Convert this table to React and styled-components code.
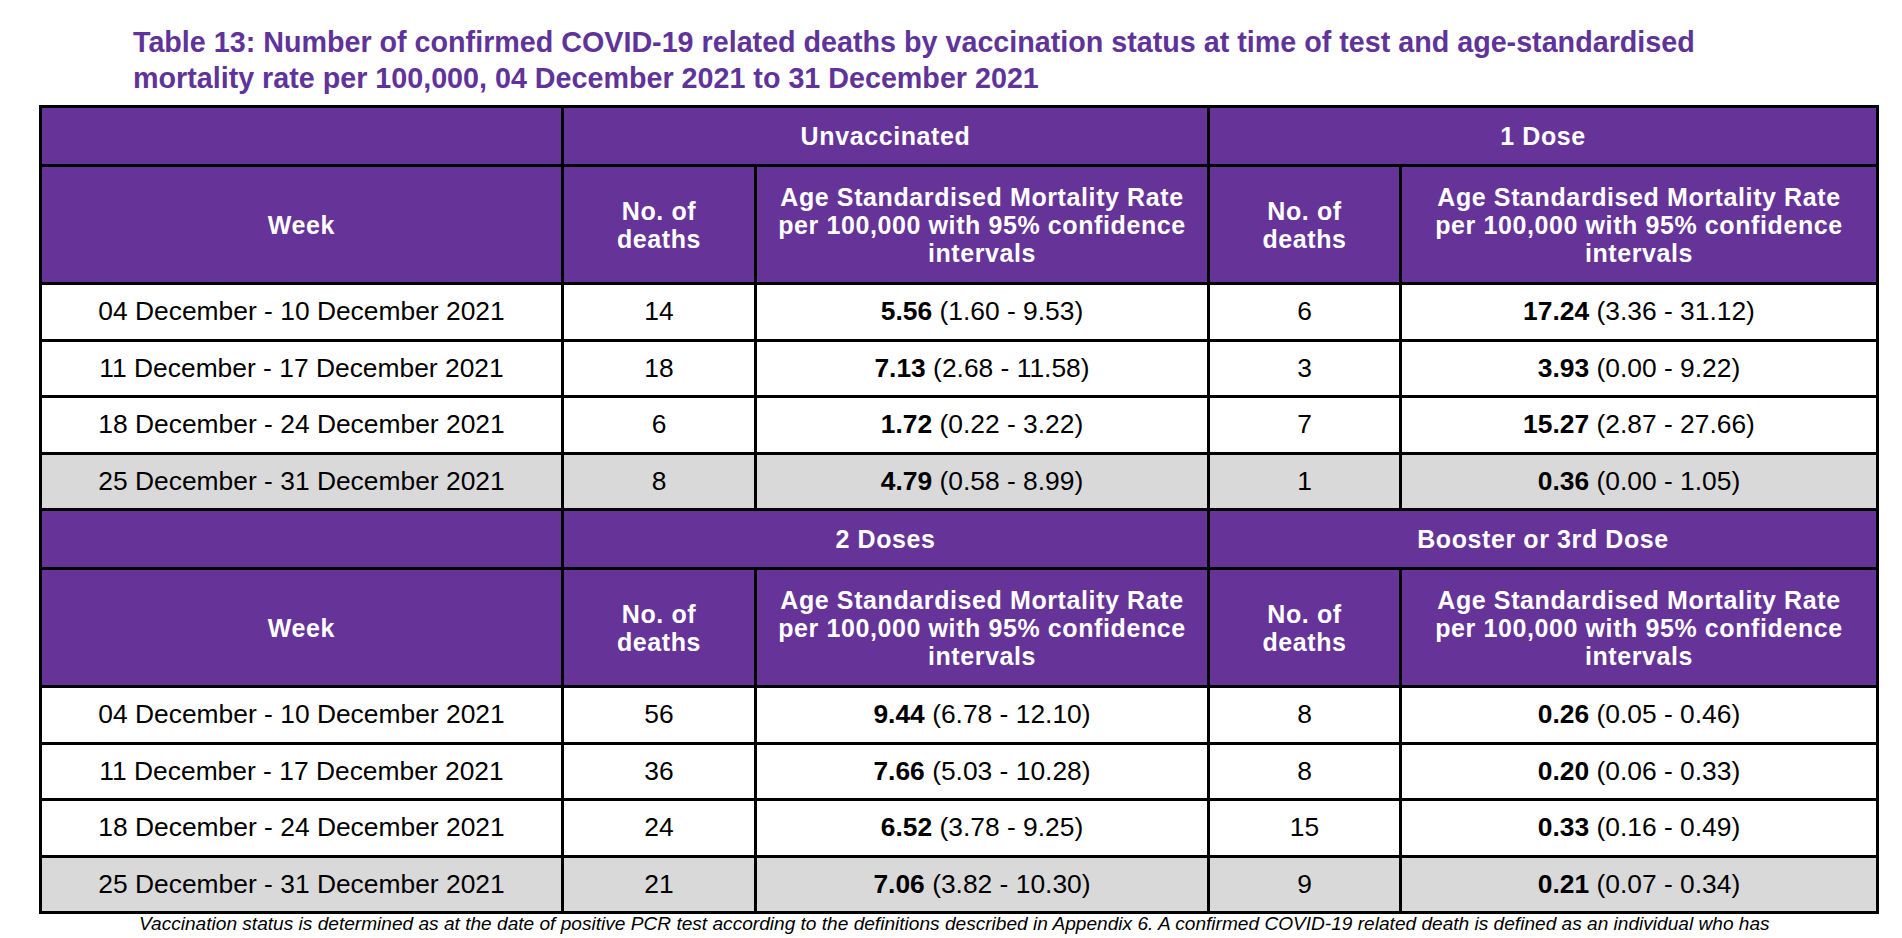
import React from "react";
import styled, { createGlobalStyle } from "styled-components";

const GlobalStyle = createGlobalStyle`
  html, body {
    margin: 0;
    padding: 0;
    background: #ffffff;
    overflow: hidden;
  }
  body {
    font-family: "Liberation Sans", Arial, sans-serif;
    color: #000;
  }
`;

const groups = [
  {
    left: "Unvaccinated",
    right: "1 Dose",
    rows: [
      ["04 December - 10 December 2021", "14", "5.56", "(1.60 - 9.53)", "6", "17.24", "(3.36 - 31.12)"],
      ["11 December - 17 December 2021", "18", "7.13", "(2.68 - 11.58)", "3", "3.93", "(0.00 - 9.22)"],
      ["18 December - 24 December 2021", "6", "1.72", "(0.22 - 3.22)", "7", "15.27", "(2.87 - 27.66)"],
      ["25 December - 31 December 2021", "8", "4.79", "(0.58 - 8.99)", "1", "0.36", "(0.00 - 1.05)"],
    ],
  },
  {
    left: "2 Doses",
    right: "Booster or 3rd Dose",
    rows: [
      ["04 December - 10 December 2021", "56", "9.44", "(6.78 - 12.10)", "8", "0.26", "(0.05 - 0.46)"],
      ["11 December - 17 December 2021", "36", "7.66", "(5.03 - 10.28)", "8", "0.20", "(0.06 - 0.33)"],
      ["18 December - 24 December 2021", "24", "6.52", "(3.78 - 9.25)", "15", "0.33", "(0.16 - 0.49)"],
      ["25 December - 31 December 2021", "21", "7.06", "(3.82 - 10.30)", "9", "0.21", "(0.07 - 0.34)"],
    ],
  },
];

const colWidths = [522, 193, 453, 192, 477];

const RateHeading = () => (
  <>
    Age Standardised Mortality Rate
    <br />
    per 100,000 with 95% confidence
    <br />
    intervals
  </>
);

const App = () => {
  return (
    <Page>
      <GlobalStyle />
      <Title>
        Table 13: Number of confirmed COVID-19 related deaths by vaccination status at time of test and age-standardised
        <br />
        mortality rate per 100,000, 04 December 2021 to 31 December 2021
      </Title>
      <Table>
        <colgroup>
          {colWidths.map((w, i) => (
            <Col key={i} $w={w} />
          ))}
        </colgroup>
        {groups.map((g) => (
          <tbody key={g.left}>
            <tr>
              <GroupCell />
              <GroupCell colSpan={2}>{g.left}</GroupCell>
              <GroupCell colSpan={2}>{g.right}</GroupCell>
            </tr>
            <tr>
              <HeadCell>Week</HeadCell>
              <HeadCell>
                No. of
                <br />
                deaths
              </HeadCell>
              <HeadCell>
                <RateHeading />
              </HeadCell>
              <HeadCell>
                No. of
                <br />
                deaths
              </HeadCell>
              <HeadCell>
                <RateHeading />
              </HeadCell>
            </tr>
            {g.rows.map((r, i) => (
              <tr key={r[0]}>
                <Cell $shaded={i === 3}>{r[0]}</Cell>
                <Cell $shaded={i === 3}>{r[1]}</Cell>
                <Cell $shaded={i === 3}>
                  <Rate>{r[2]}</Rate> {r[3]}
                </Cell>
                <Cell $shaded={i === 3}>{r[4]}</Cell>
                <Cell $shaded={i === 3}>
                  <Rate>{r[5]}</Rate> {r[6]}
                </Cell>
              </tr>
            ))}
          </tbody>
        ))}
      </Table>
      <Footnote>
        Vaccination status is determined as at the date of positive PCR test according to the definitions described in
        Appendix 6. A confirmed COVID-19 related death is defined as an individual who has
      </Footnote>
    </Page>
  );
};

const Page = styled.div`
  width: 1902px;
  height: 938px;
  overflow: hidden;
`;

const Title = styled.h1`
  margin: 0;
  padding: 24px 0 0 133px;
  font-family: "Liberation Sans", Arial, sans-serif;
  font-size: 28.7px;
  line-height: 36px;
  font-weight: bold;
  color: #60339a;
  height: 81px;
  white-space: nowrap;
`;

const Table = styled.table`
  margin-left: 39px;
  border-collapse: collapse;
  table-layout: fixed;
  border: 3px solid #000;
`;

const Col = styled.col`
  width: ${(p) => p.$w}px;
`;

const GroupCell = styled.th`
  height: 56px;
  padding: 0;
  background: #663399;
  color: #fff;
  border: 3px solid #000;
  font-family: "Liberation Sans", Arial, sans-serif;
  font-size: 25px;
  letter-spacing: 0.6px;
  font-weight: bold;
  text-align: center;
  vertical-align: middle;
`;

const HeadCell = styled(GroupCell)`
  height: 115px;
  line-height: 28px;
`;

const Cell = styled.td`
  height: 53.5px;
  padding: 0;
  border: 3px solid #000;
  background: ${(p) => (p.$shaded ? "#d9d9d9" : "#ffffff")};
  font-size: 26.4px;
  text-align: center;
  vertical-align: middle;
  white-space: nowrap;
`;

const Rate = styled.b`
  font-weight: bold;
`;

const Footnote = styled.p`
  margin: 0;
  padding-left: 139px;
  font-size: 19.1px;
  font-style: italic;
  line-height: 20px;
  white-space: nowrap;
`;

export default App;
